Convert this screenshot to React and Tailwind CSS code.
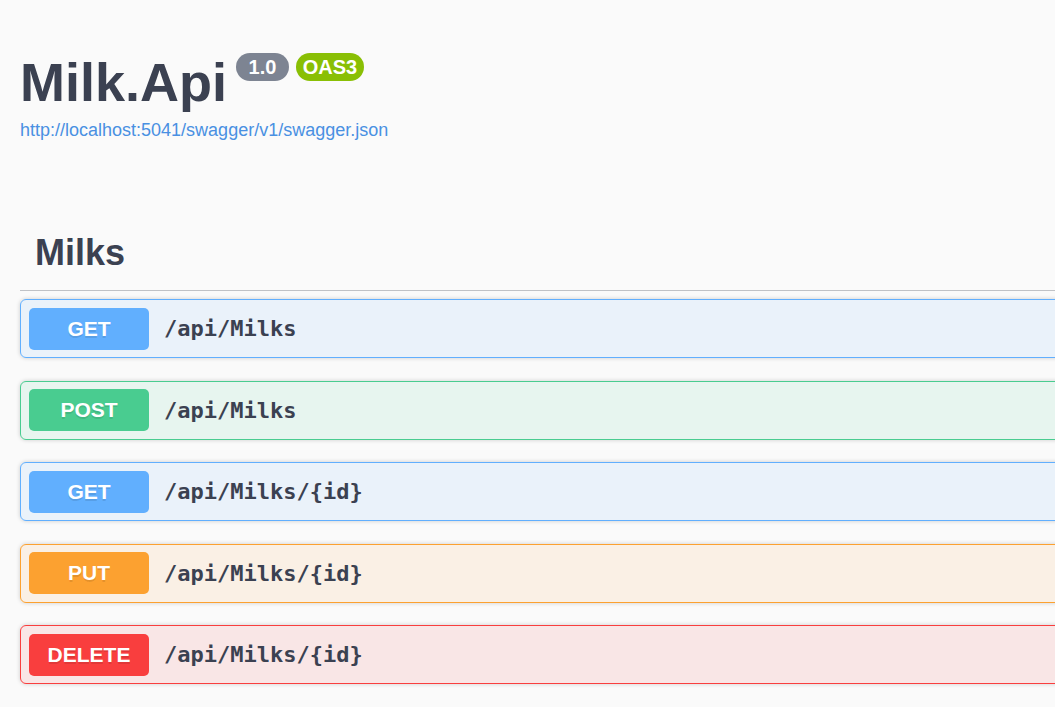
import React from 'react';

const methods = {
    GET: { block: "bg-[rgba(97,175,254,0.1)] border-[#61affe]", badge: "bg-[#61affe]" },
    POST: { block: "bg-[rgba(73,204,144,0.1)] border-[#49cc90]", badge: "bg-[#49cc90]" },
    PUT: { block: "bg-[rgba(252,161,48,0.1)] border-[#fca130]", badge: "bg-[#fca130]" },
    DELETE: { block: "bg-[rgba(249,62,62,0.1)] border-[#f93e3e]", badge: "bg-[#f93e3e]" },
};

const ops = [
    { method: "GET", path: "/api/Milks" },
    { method: "POST", path: "/api/Milks" },
    { method: "GET", path: "/api/Milks/{id}" },
    { method: "PUT", path: "/api/Milks/{id}" },
    { method: "DELETE", path: "/api/Milks/{id}" },
];

const OpBlock = ({ method, path }) => (
    <div className={`flex items-center border rounded-[6px] pl-[8px] py-[7.5px] mb-[22.5px] shadow-[0_0_4px_rgba(0,0,0,0.19)] ${methods[method].block}`}>
        <span className={`w-[120px] h-[42px] flex items-center justify-center rounded-[5px] text-white font-bold text-[21px] [text-shadow:0_1.5px_0_rgba(0,0,0,0.1)] ${methods[method].badge}`}>
            {method}
        </span>
        <span className="ml-[15px] font-['DejaVu_Sans_Mono',monospace] font-bold text-[22px] text-[#3b4151]">
            {path}
        </span>
    </div>
);

export default function App() {
    return (
        <div className="w-full min-h-[707px] overflow-hidden bg-[#fafafa] font-['Liberation_Sans',Arial,sans-serif]">
            <div className="w-[1500px] px-[20px]">
                <div className="pt-[55px]">
                    <div className="flex items-start">
                        <h1 className="text-[54px] leading-[54px] font-bold text-[#3b4151]">Milk.Api</h1>
                        <span className="ml-[9px] mt-[-2px] w-[53px] h-[28px] rounded-full bg-[#7d8492] text-white font-bold text-[20px] leading-[28px] text-center">1.0</span>
                        <span className="ml-[7px] mt-[-2px] w-[68px] h-[28px] rounded-full bg-[#89bf04] text-white font-bold text-[20px] leading-[28px] text-center">OAS3</span>
                    </div>
                    <a className="block mt-[8px] text-[18px] text-[#4990e2]" href="#">http://localhost:5041/swagger/v1/swagger.json</a>
                </div>

                <div className="mt-[73px]">
                    <div className="pl-[15px] pt-[15px] pb-[16px] border-b border-[rgba(59,65,81,0.3)] mb-[8px]">
                        <h2 className="text-[36px] leading-[42px] font-bold text-[#3b4151]">Milks</h2>
                    </div>
                    {ops.map((op, i) => (
                        <OpBlock key={i} {...op} />
                    ))}
                </div>
            </div>
        </div>
    );
}
